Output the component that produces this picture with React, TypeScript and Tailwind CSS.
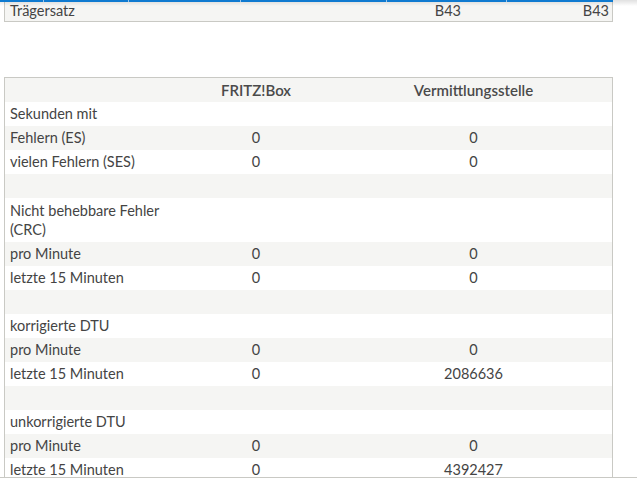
import React from "react";

type Row = { label: string[]; a?: string; b?: string };

const rows: Row[] = [
  { label: ["Sekunden mit"] },
  { label: ["Fehlern (ES)"], a: "0", b: "0" },
  { label: ["vielen Fehlern (SES)"], a: "0", b: "0" },
  { label: [""] },
  { label: ["Nicht behebbare Fehler", "(CRC)"] },
  { label: ["pro Minute"], a: "0", b: "0" },
  { label: ["letzte 15 Minuten"], a: "0", b: "0" },
  { label: [""] },
  { label: ["korrigierte DTU"] },
  { label: ["pro Minute"], a: "0", b: "0" },
  { label: ["letzte 15 Minuten"], a: "0", b: "2086636" },
  { label: [""] },
  { label: ["unkorrigierte DTU"] },
  { label: ["pro Minute"], a: "0", b: "0" },
  { label: ["letzte 15 Minuten"], a: "0", b: "4392427" },
];

export default function App() {
  return (
    <div className="relative w-[637px] h-[478px] overflow-hidden bg-white text-[14.5px] text-[#444] font-['Source_Sans_Pro','Lato',sans-serif]">
      {/* top table (scrolled) */}
      <div className="ml-[4px] w-[609px] h-[22px] bg-[#f5f5f3] border-x border-b border-[#c9c9c4] flex items-center leading-[20px]">
        <div className="w-[171px] pl-[5px]">Trägersatz</div>
        <div className="w-[285px] text-right">B43</div>
        <div className="flex-1 text-right pr-[3px]">B43</div>
      </div>

      {/* main table */}
      <div className="mt-[55px] ml-[4px] w-[609px] border border-[#c9c9c4] border-b-0">
        <div className="grid grid-cols-[172px_158px_1fr] h-[24px] items-center bg-[#f5f5f3] font-semibold text-[15px] text-[#4a4a4a]">
          <div />
          <div className="text-center">FRITZ!Box</div>
          <div className="text-center">Vermittlungsstelle</div>
        </div>
        {rows.map((r, i) => (
          <div
            key={i}
            className={`grid grid-cols-[172px_158px_1fr] items-center ${
              r.label.length > 1 ? "py-[3px] leading-[19px]" : "h-[24px] leading-[20px]"
            } ${i % 2 === 0 ? "bg-white" : "bg-[#f5f5f3]"}`}
          >
            <div className="pl-[5px]">
              {r.label.map((l, j) => (
                <div key={j}>{l || "\u00a0"}</div>
              ))}
            </div>
            <div className="text-center">{r.a ?? ""}</div>
            <div className="text-center">{r.b ?? ""}</div>
          </div>
        ))}
      </div>

      {/* sticky header edge: blue line with shadow */}
      <div className="absolute top-0 left-0 w-full h-[6px] bg-gradient-to-b from-[rgba(0,0,0,0.12)] to-transparent" />
      <div className="absolute top-0 left-0 w-[613px] h-[2px] flex">
        <div className="w-[43px] bg-[#0f7ad0]" />
        <div className="w-px bg-[#9cc6ea]" />
        <div className="w-[84px] bg-[#0f7ad0]" />
        <div className="w-px bg-[#9cc6ea]" />
        <div className="w-[111px] bg-[#0f7ad0]" />
        <div className="w-px bg-[#9cc6ea]" />
        <div className="w-[145px] bg-[#0f7ad0]" />
        <div className="w-px bg-[#9cc6ea]" />
        <div className="w-[119px] bg-[#0f7ad0]" />
        <div className="w-px bg-[#9cc6ea]" />
        <div className="flex-1 bg-[#0f7ad0]" />
      </div>

      {/* bottom edge */}
      <div className="absolute bottom-0 left-0 w-full h-px bg-[#c9c9c4]" />
    </div>
  );
}
